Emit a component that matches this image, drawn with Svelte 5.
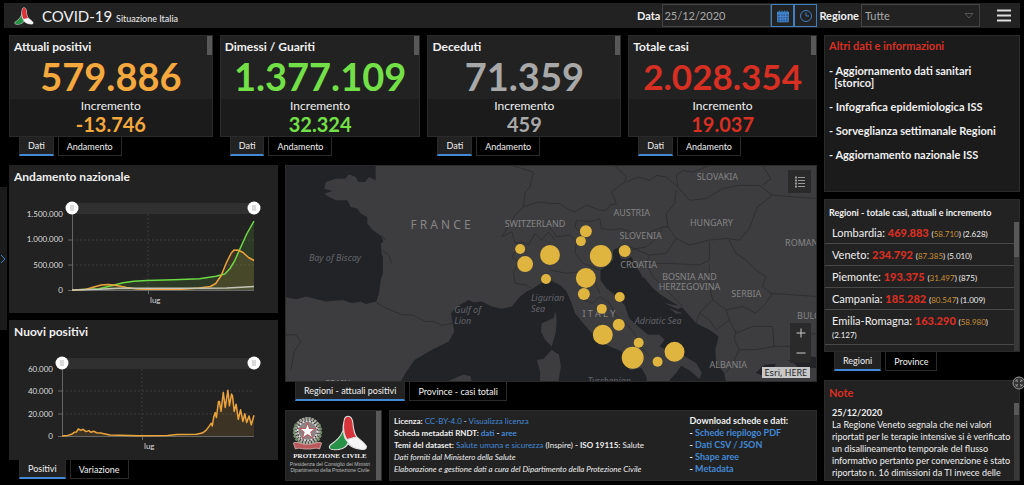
<script lang="ts">
  type Point = [number, number]

  const kpis = [
    { title: 'Attuali positivi', total: '579.886', delta: '-13.746', tone: 'orange' },
    { title: 'Dimessi / Guariti', total: '1.377.109', delta: '32.324', tone: 'green' },
    { title: 'Deceduti', total: '71.359', delta: '459', tone: 'grey' },
    { title: 'Totale casi', total: '2.028.354', delta: '19.037', tone: 'red' },
  ]

  const regions = [
    { name: 'Lombardia', total: '469.883', active: '58.710', delta: '2.628' },
    { name: 'Veneto', total: '234.792', active: '87.385', delta: '5.010' },
    { name: 'Piemonte', total: '193.375', active: '31.497', delta: '875' },
    { name: 'Campania', total: '185.282', active: '80.547', delta: '1.009' },
    { name: 'Emilia-Romagna', total: '163.290', active: '58.980', delta: '2.127' },
    { name: 'Lazio', total: '155.667', active: '76.674', delta: '1.691' },
  ]

  const links = [
    'Infografica epidemiologica ISS',
    'Sorveglianza settimanale Regioni',
    'Aggiornamento nazionale ISS',
  ]

  const downloads = ['Schede riepilogo PDF', 'Dati CSV / JSON', 'Shape aree', 'Metadata']

  // [share of the period, thousands of people]
  const recovered: Point[] = [
    [0, 0], [0.15, 25], [0.21, 80], [0.28, 145], [0.34, 175], [0.41, 192], [0.56, 205], [0.7, 225],
    [0.79, 277], [0.84, 322], [0.868, 430], [0.895, 595], [0.923, 825], [0.96, 1120], [1, 1377],
  ]
  const positive: Point[] = [
    [0, 0], [0.07, 8], [0.12, 60], [0.16, 98], [0.2, 108], [0.24, 95], [0.3, 50], [0.36, 22], [0.42, 14],
    [0.6, 14], [0.7, 38], [0.76, 70], [0.79, 130], [0.82, 290], [0.85, 560], [0.875, 740],
    [0.89, 800], [0.9, 795], [0.91, 800], [0.94, 750], [0.97, 650], [1, 590],
  ]
  const deceased: Point[] = [
    [0, 0], [0.15, 15], [0.25, 34], [0.7, 36], [0.85, 42], [0.93, 57], [1, 71],
  ]
  const newCases: Point[] = [
    [0, 0], [0.03, 0.5], [0.05, 1.5], [0.065, 3.4], [0.075, 3.6], [0.085, 6.3], [0.098, 5], [0.11, 6],
    [0.125, 3.9], [0.14, 4.8], [0.15, 3.3], [0.165, 4.2], [0.18, 3], [0.2, 2.6], [0.25, 1], [0.4, 0.3],
    [0.55, 0.5], [0.6, 1.4], [0.7, 1.6], [0.73, 2.6], [0.75, 5], [0.77, 9.5], [0.777, 11.5],
    [0.783, 9], [0.79, 17], [0.798, 21], [0.804, 16.5], [0.815, 31], [0.82, 31], [0.828, 22],
    [0.84, 39], [0.85, 25.5], [0.864, 41], [0.872, 27], [0.883, 37.5], [0.888, 36], [0.897, 22], [0.907, 28.5],
    [0.918, 15], [0.93, 23.5], [0.942, 13], [0.952, 20], [0.962, 12], [0.974, 18], [0.986, 10], [1, 18.6],
  ]

  function line(data: Point[], left: number, bottom: number, height: number, max: number) {
    return data
      .map(([t, v]) => `${(left + t * (245 - left)).toFixed(1)},${(bottom - (v / max) * height).toFixed(1)}`)
      .join(' ')
  }

  function area(data: Point[], left: number, bottom: number, height: number, max: number) {
    return `${left},${bottom} ${line(data, left, bottom, height, max)} 245,${bottom}`
  }

  const trend = [
    { name: 'recovered', data: recovered },
    { name: 'positive', data: positive },
    { name: 'deceased', data: deceased },
  ]

  const bubbles = [
    [235, 84, 5], [240, 99, 8], [265, 90, 10], [261, 114, 5], [301, 66, 6], [296, 76, 5],
    [316, 91, 11], [340, 86, 6], [301, 113, 10], [299, 129, 6], [335, 132, 5], [317, 144, 5],
    [318, 170, 10], [334, 160, 6], [354, 178, 5], [348, 193, 11], [373, 197, 5], [390, 187, 10],
  ]

  const countries = [
    ['SWITZERLAND', 250, 62], ['AUSTRIA', 347, 51], ['SLOVAKIA', 433, 15], ['HUNGARY', 427, 61],
    ['SLOVENIA', 356, 74], ['CROATIA', 354, 103], ['BOSNIA AND', 405, 115],
    ['HERZEGOVINA', 405, 125], ['SERBIA', 462, 132], ['ALBANIA', 444, 203], ['I T A L Y', 314, 152],
  ] as const

  const seas = [
    ['Bay of Biscay', 23, 96], ['Gulf of', 169, 148], ['Lion', 169, 159], ['Ligurian', 246, 136],
    ['Sea', 246, 147], ['Adriatic Sea', 350, 159], ['Tyrrhenian', 303, 219],
  ] as const

  let date = $state('25/12/2020')
  let region = $state('Tutte')
</script>

{#snippet tabs(first: string, second: string)}
  <div class="tabs" role="tablist">
    <button class="tab active" role="tab" aria-selected="true">{first}</button>
    <button class="tab" role="tab" aria-selected="false">{second}</button>
  </div>
{/snippet}

{#snippet blades()}
  <path class="blade-edge" d="M208 42C216 42 220 48 222 60C224 82 226 94 234 106C246 116 262 128 265 136C265 145 256 146 246 144C230 142 216 137 208 127C200 140 186 146 165 146C152 146 146 140 152 132C168 122 184 108 192 88C192 76 194 60 197 50C199 44 203 42 208 42Z" />
  <path fill="#d8343c" d="M208 43C216 44 219 50 221 62C223 84 225 95 233 106C222 107 213 110 206 113C196 102 193 74 197 54C199 46 203 43 208 43Z" />
  <path fill="#279247" d="M192 90C192 106 199 117 206 123C202 137 188 145 166 145C152 145 148 139 154 132C168 123 184 109 192 90Z" />
  <path fill="#f5f5f5" d="M205 117C214 112 226 109 235 109C246 117 262 129 264 136C264 144 256 145 246 143C228 141 212 133 205 117Z" />
{/snippet}

{#snippet slider(left: number)}
  <rect class="band" x={left} y="13" width={245 - left} height="11" />
  {#each [left, 245] as x}
    <circle cx={x} cy="18" r="6.5" fill="#fff" />
    <path d="M{x - 1} 15v6M{x + 1} 15v6" stroke="#999" stroke-width=".7" />
  {/each}
{/snippet}

<div class="app">
  <header>
    <svg class="brand" viewBox="145 38 125 112" aria-hidden="true">{@render blades()}</svg>
    <h1>COVID-19 <small>Situazione Italia</small></h1>
    <div class="filters">
      <label for="date">Data</label>
      <input id="date" type="text" bind:value={date} />
      <button class="picker" aria-label="Calendario">
        <svg viewBox="0 0 14 14" width="14" height="14">
          <path d="M1.500 3h11v10h-11z" fill="#2d5f9e" />
          <path d="M1.500 3h11v2h-11zM3.500 1.500v2M6 1.500v2M8.500 1.500v2M11 1.500v2" fill="#3f7fc4" stroke="#3f7fc4" stroke-width=".8" />
          <path d="M1.500 7.500h11M1.500 10h11M4.500 5v8M7 5v8M9.500 5v8M1.500 3v10h11V3" fill="none" stroke="#5293dc" stroke-width=".6" />
        </svg>
      </button>
      <button class="picker" aria-label="Ora">
        <svg viewBox="0 0 14 14" width="14" height="14" fill="none" stroke="#3f7fc4">
          <circle cx="7" cy="7" r="5.5" />
          <path d="M7 3.500V7h3" />
        </svg>
      </button>
      <label for="region">Regione</label>
      <div class="select">
        <select id="region" bind:value={region}>
          <option>Tutte</option>
          {#each regions as r}
            <option>{r.name}</option>
          {/each}
        </select>
        <svg viewBox="0 0 10 6" width="10" height="6"><path d="M1 .5h8L5 5z" fill="none" stroke="#555" /></svg>
      </div>
      <button class="menu" aria-label="Menu">
        <svg viewBox="0 0 14 13" width="14" height="13"><path d="M0 1.500h14M0 6.500h14M0 11.500h14" stroke="#ddd" stroke-width="2" /></svg>
      </button>
    </div>
  </header>

  <main>
    <div class="primary">
      <div class="kpis">
        {#each kpis as kpi}
          <section>
            <div class="panel kpi {kpi.tone}">
              <h2>{kpi.title}</h2>
              <div class="total">{kpi.total}</div>
              <div class="increment">
                <span>Incremento</span>
                <strong>{kpi.delta}</strong>
              </div>
              <i class="thumb"></i>
            </div>
            {@render tabs('Dati', 'Andamento')}
          </section>
        {/each}
      </div>

      <div class="lower">
        <div class="charts">
          <section class="panel chart">
            <h2>Andamento nazionale</h2>
            <svg viewBox="0 0 269 123">
              <path class="grid" d="M63 50H245M63 75H245M139 24V100" />
              {#each trend as s}
                <polygon class="area {s.name}" points={area(s.data, 63, 100, 75, 1500)} />
              {/each}
              <path class="axis" d="M63.500 24V100M59 50h4M59 75h4M59 100.500H245M139.500 100v4" />
              {#each trend as s}
                <polyline class="line {s.name}" points={line(s.data, 63, 100, 75, 1500)} />
              {/each}
              <text class="end" x="54" y="27">1.500.000</text>
              <text class="end" x="54" y="52">1.000.000</text>
              <text class="end" x="54" y="78">500.000</text>
              <text class="end" x="54" y="103">0</text>
              <text x="141" y="113">lug</text>
              {@render slider(63)}
            </svg>
          </section>

          <section>
            <div class="panel chart">
              <h2>Nuovi positivi</h2>
              <svg viewBox="0 0 269 115">
                <path class="grid" d="M53 46H245M53 69H245M133 24V91" />
                <polygon class="area positive" points={area(newCases, 53, 91, 67, 60)} />
                <path class="axis" d="M53.500 24V91M49 46h4M49 69h4M49 91.500H245M133.500 91v4" />
                <polyline class="line positive" points={line(newCases, 53, 91, 67, 60)} />
                <text class="end" x="44" y="27">60.000</text>
                <text class="end" x="44" y="49">40.000</text>
                <text class="end" x="44" y="72">20.000</text>
                <text class="end" x="44" y="94">0</text>
                <text x="135" y="104">lug</text>
                {@render slider(53)}
              </svg>
            </div>
            {@render tabs('Positivi', 'Variazione')}
          </section>
        </div>

        <div class="center">
          <section>
            <div class="map">
              <svg viewBox="0 0 532 217" preserveAspectRatio="xMidYMid slice">
                <rect width="532" height="217" fill="#3d3d3f" />
                <g transform="translate(0 -5) scale(.33333)">
                  <path class="sea" d="M0 15H270V60L250 50 238 65 218 65 210 50 190 42 178 55 150 55 120 65 115 85 140 92 115 100 130 110 150 120 185 120 195 140 215 145 225 160 245 170 245 190 262 210 288 228 293 245 286 250 288 285 292 290 292 340 285 360 280 400 272 425 240 432 225 425 200 430 170 420 120 425 60 410 30 418 0 412Z" />
                  <path class="sea" d="M345 668L360 640 388 600 440 570 490 545 507 515 500 480 497 460 515 440 550 420 565 428 590 425 620 440 650 447 680 440 705 410 725 395 745 385 770 368 795 360 825 375 845 395 860 430 870 460 895 490 925 525 945 545 975 560 1010 575 1035 632 1070 625 1085 650 1087 668Z" />
                  <path class="land" d="M812 455L805 475 770 490 768 515 780 540 800 560 812 520 815 480ZM755 600L775 598 800 570 822 585 828 620 820 668H765V635ZM480 668L510 655 535 645 555 650 560 668Z" />
                  <path class="border" d="M272 428L300 445 350 465 380 465 420 485 445 485 470 497 502 490M0 525L30 525 45 545 25 575 15 630M680 15L745 35 735 80 720 95 715 140 690 165 665 205 650 230M715 140L760 125 810 130M650 230L680 215 690 250 710 245 730 255 750 220 770 240 790 215 810 240M700 260L680 290 700 305 685 340 690 370 720 375 740 385" />
                  <path class="border" d="M290 225L298 240M292 272L310 285 318 310" />
                </g>
                <g transform="translate(265 -5) scale(.33333)">
                  <path class="sea" d="M190 270L205 262 212 295 228 298 245 290 262 325 285 355 310 385 335 405 365 425 400 445 440 490 480 510 508 530 498 570 500 610 525 640 530 668H355L380 640 395 618 420 632 450 658 457 640 440 610 405 590 350 570 330 560 345 540 330 525 295 525 265 500 238 475 225 435 195 405 170 385 152 360 152 330 175 315 190 300ZM620 640L645 615 680 612 670 640 650 650ZM715 600L745 605 760 590 805 592V625H780L760 640 740 615Z" />
                  <path class="land" d="M240 300L255 320 250 325ZM268 330L285 350 280 355ZM345 430L400 440 385 448ZM360 445L400 460 380 462Z" />
                  <path class="border" d="M0 130L30 130 50 145 75 155 110 135 150 150 170 150 180 135 200 130 185 95 225 65 230 50 195 15M230 65L265 50 300 60 320 45 350 50 385 80 380 45 400 30 430 35 480 15M385 80L420 120 470 115 520 85 570 75 630 75 670 105 805 115M640 15L665 55 640 75M380 90L375 130 350 160 355 200 340 200 280 225 210 205 190 210 155 205 150 175 120 185 80 180 75 200 100 220M355 200L380 235 420 255 480 240 530 235 570 240 600 205 625 140 670 105M340 200L315 240 290 260 240 270 220 255 205 262M380 235L350 280 300 285 240 260M300 285L290 310 360 310 450 315 480 300 480 245M540 240L560 280 590 300 620 330 650 350 640 380 665 400 805 410M290 310L310 350 340 380 400 440M480 315L480 380 490 420 450 460 440 490M450 460L480 480 500 510 540 480 530 450 490 420M530 450L580 440 620 460 650 430 670 400M540 480L560 520 610 500 670 500 675 560 620 570 570 570 555 540 560 510M570 570L550 610 530 640M675 560L720 560 760 530 805 520M0 200L20 230 60 225 80 245 75 280 100 310 150 330M0 330L50 340 90 335 130 355 150 400M100 420L130 430 150 410 180 430 200 470 230 490 260 530 270 560 300 590" />
                </g>
                <text class="france" x="125" y="64">F R A N C E</text>
                {#each countries as [name, x, y]}
                  <text class="country" {x} {y}>{name}</text>
                {/each}
                <text class="country start" x="501" y="81">ROMANIA</text>
                <text class="country start" x="513" y="154">BULGARIA</text>
                <text class="country" x="52" y="222">SPAIN</text>
                {#each seas as [name, x, y]}
                  <text class="water" {x} {y}>{name}</text>
                {/each}
                {#each bubbles as [cx, cy, r]}
                  <circle class="bubble" {cx} {cy} {r} />
                {/each}
              </svg>
              <button class="legend" aria-label="Legenda">
                <svg viewBox="0 0 12 12" width="12" height="12" stroke="#999"><path d="M4 1.500h7M4 4.500h7M4 7.500h7M4 10.500h7" /><path d="M1 1.500h2M1 4.500h2M1 7.500h2M1 10.500h2" stroke-width="2" /></svg>
              </button>
              <div class="zoom">
                <button aria-label="Ingrandisci"><svg viewBox="0 0 10 10" width="10" height="10"><path d="M5 .5v9M.5 5h9" stroke="#ccc" /></svg></button>
                <button aria-label="Riduci"><svg viewBox="0 0 10 10" width="10" height="10"><path d="M.5 5h9" stroke="#ccc" /></svg></button>
              </div>
              <span class="credit">Esri, HERE</span>
            </div>
            {@render tabs('Regioni - attuali positivi', 'Province - casi totali')}
          </section>

          <div class="info">
            <div class="panel logos">
              <div class="marks">
                <svg viewBox="36 42 92 104" width="31" height="35" aria-label="Repubblica Italiana">
                  <circle cx="82" cy="86" r="36" fill="none" stroke="#a9aaa0" stroke-width="10" stroke-dasharray="7 2" />
                  <path d="M48 66C36 90 42 114 66 126M116 66C128 90 122 114 98 126" fill="none" stroke="#6f8c68" stroke-width="7" stroke-dasharray="8 3" />
                  <circle cx="82" cy="86" r="29" fill="#8e8383" stroke="#ddd" stroke-width="5" stroke-dasharray="6 4" />
                  <path d="M82 62L88 79 106 79 92 90 97 108 82 97 67 108 72 90 58 79 76 79Z" fill="#fff" stroke="#b45c60" stroke-width="3" />
                  <path d="M40 122C54 116 64 128 82 126C100 128 110 116 124 122L118 140C104 134 96 142 82 140C68 142 60 134 46 140Z" fill="#b9595c" stroke="#e2c9c9" stroke-width="2" />
                </svg>
                <svg viewBox="145 38 125 112" width="40" height="36" aria-label="Protezione Civile">{@render blades()}</svg>
              </div>
              <b>PROTEZIONE CIVILE</b>
              <span>Presidenza del Consiglio dei Ministri</span>
              <span>Dipartimento della Protezione Civile</span>
              <i class="thumb"></i>
            </div>
            <div class="panel credits">
              <div>
                <p><b>Licenza:</b> <a href="#licenza">CC-BY-4.0</a> - <a href="#visualizza">Visualizza licenza</a></p>
                <p><b>Scheda metadati RNDT: <a href="#dati">dati</a> - <a href="#aree">aree</a></b></p>
                <p><b>Temi del dataset:</b> <a href="#temi">Salute umana e sicurezza</a> (Inspire) <b>- ISO 19115:</b> Salute</p>
                <p><em>Dati forniti dal Ministero della Salute</em></p>
                <p><em>Elaborazione e gestione dati a cura del Dipartimento della Protezione Civile</em></p>
              </div>
              <div class="downloads">
                <p>Download schede e dati:</p>
                {#each downloads as item}
                  <p>- <a href="#download">{item}</a></p>
                {/each}
              </div>
            </div>
          </div>
        </div>
      </div>
    </div>

    <aside>
      <section class="panel other">
        <h2>Altri dati e informazioni</h2>
        <a href="#storico">- Aggiornamento dati sanitari<br />&nbsp; [storico]</a>
        {#each links as item}
          <a href="#info">- {item}</a>
        {/each}
      </section>

      <section class="list">
        <div class="panel">
          <h2>Regioni - totale casi, attuali e incremento</h2>
          <div class="scroller">
            <ul>
              {#each regions as r}
                <li>{r.name}: <strong>{r.total}</strong> <small>(<span>{r.active}</span>) ({r.delta})</small></li>
              {/each}
            </ul>
            <i class="track"></i>
          </div>
        </div>
        {@render tabs('Regioni', 'Province')}
      </section>

      <section class="panel note">
        <h2>Note</h2>
        <div class="scroller">
          <p><b>25/12/2020</b><br />La Regione Veneto segnala che nei valori riportati per le terapie intensive si è verificato un disallineamento temporale del flusso informativo pertanto per convenzione è stato riportato n. 16 dimissioni da TI invece delle</p>
          <i class="track"></i>
        </div>
        <button class="expand" aria-label="Espandi">
          <svg viewBox="0 0 14 14" width="14" height="14" fill="none" stroke="#999"><circle cx="7" cy="7" r="6" fill="#333" /><path d="M4 6V4h2M8 4h2v2M10 8v2H8M6 10H4V8M4 4l2 2M10 4L8 6M10 10L8 8M4 10l2-2" stroke-width=".8" /></svg>
        </button>
      </section>
    </aside>
  </main>

  <button class="drawer" aria-label="Apri pannello">
    <svg viewBox="0 0 5 10" width="5" height="10"><path d="M0 1l4 4-4 4" fill="none" stroke="#3f7fc4" /></svg>
  </button>
</div>

<style>
  :global(body) {
    margin: 0;
    background: #000;
  }

  * { box-sizing: border-box; }

  .app {
    position: relative;
    min-height: 100vh;
    padding: 3px 4px 4px;
    background: #000;
    color: #f0f0f0;
    font-family: Lato, "Open Sans", sans-serif;
    font-size: 12px;
    overflow: hidden;
  }

  button {
    font: inherit;
    color: inherit;
    padding: 0;
    border: 0;
    background: none;
    display: flex;
    align-items: center;
    justify-content: center;
    cursor: pointer;
  }

  h1, h2, p, ul {
    margin: 0;
    padding: 0;
  }

  a {
    color: #4289d6;
    text-decoration: none;
  }

  svg { display: block; }

  header {
    display: flex;
    align-items: center;
    height: 25px;
    padding: 0 9px 0 10px;
    background: #222;
  }

  .brand {
    width: 20px;
    height: 18px;
  }

  .blade-edge {
    fill: #ddd;
    stroke: #ddd;
    stroke-width: 4;
  }

  h1 {
    margin-left: 8px;
    font-size: 15px;
    font-weight: 400;
    white-space: nowrap;
  }

  h1 small { font-size: 9px; }

  .filters {
    display: flex;
    align-items: center;
    margin-left: auto;
    height: 23px;
  }

  label {
    margin: 0 2px;
    font-size: 11px;
    font-weight: 700;
  }

  input, select {
    height: 23px;
    border: 1px solid #444;
    border-radius: 0;
    background: #222;
    color: #aaa;
    font: inherit;
    font-size: 11px;
  }

  input {
    width: 109px;
    padding: 0 1px;
  }

  .picker {
    width: 23px;
    height: 23px;
    border: 1px solid #3f7fc4;
  }

  .select { position: relative; }

  select {
    width: 119px;
    padding: 0 3px;
    appearance: none;
  }

  .select svg {
    position: absolute;
    right: 6px;
    top: 9px;
    pointer-events: none;
  }

  .menu { margin-left: 17px; }

  main {
    display: grid;
    grid-template-columns: 808fr 196fr;
    gap: 7px;
    padding: 7px 0 0 5px;
  }

  .panel {
    position: relative;
    background: #222;
    border: 1px solid #2a2a2a;
  }

  h2 {
    font-size: 12px;
    font-weight: 700;
    line-height: 15px;
    white-space: nowrap;
  }

  .kpis {
    display: grid;
    grid-template-columns: 204fr 201fr 194fr 189fr;
    gap: 7px;
  }

  .kpi {
    text-align: center;
    padding-top: 3px;
  }

  .kpi h2 {
    text-align: left;
    padding-left: 4px;
  }

  .total {
    font-size: 38px;
    font-weight: 700;
    line-height: 45px;
  }

  .increment {
    height: 37px;
    background: #1b1b1b;
    line-height: 14px;
  }

  .increment strong {
    display: block;
    font-size: 20px;
    line-height: 22px;
  }

  .orange .total, .orange strong { color: #f4a83d; }
  .green .total, .green strong { color: #74e048; }
  .grey .total, .grey strong { color: #a8a8a8; }
  .red .total, .red strong { color: #d82f23; }
  .red .total { font-size: 35px; }

  .thumb {
    position: absolute;
    top: 0;
    right: 0;
    width: 5px;
    height: 19px;
    background: #585858;
  }

  .tabs {
    display: flex;
    gap: 4px;
    padding-left: 10px;
  }

  .tab {
    height: 19px;
    padding: 0 8px;
    border: 1px solid #2a2a2a;
    border-top: 0;
    font-size: 9px;
    white-space: nowrap;
  }

  .tab.active {
    background: #222;
    border-bottom: 2px solid #4289d6;
  }

  .lower {
    display: grid;
    grid-template-columns: 269fr 532fr;
    gap: 7px;
    margin-top: 9px;
  }

  .charts {
    display: flex;
    flex-direction: column;
    gap: 7px;
  }

  .chart {
    border: 0;
    padding-top: 4px;
  }

  .chart h2 {
    padding-left: 5px;
    margin-bottom: 6px;
  }

  .chart svg { width: 100%; }

  .chart text {
    fill: #ddd;
    font-size: 8px;
  }

  .chart .end { text-anchor: end; }
  .band { fill: #303030; }

  .grid {
    stroke: #3a3a3a;
    stroke-dasharray: 2 2;
    fill: none;
  }

  .axis {
    stroke: #666;
    fill: none;
  }

  .area { fill-opacity: 0.13; }
  .area.recovered { fill: #74e048; }
  .area.positive { fill: #f4a83d; }
  .area.deceased { fill: #a8a8a8; }

  .line {
    fill: none;
    stroke-width: 1.5;
    stroke-linejoin: round;
  }

  .line.recovered { stroke: #6cd944; }
  .line.positive { stroke: #eba33c; }
  .line.deceased { stroke: #c4c4b8; }

  .map {
    position: relative;
    border: 1px solid #2a2a2a;
  }

  .map > svg {
    width: 100%;
    height: 215px;
  }

  .sea { fill: #222327; }
  .land { fill: #3d3d3f; }

  .border {
    fill: none;
    stroke: #2f2f32;
    stroke-width: 3;
    stroke-linejoin: round;
  }

  .map text {
    font-family: "Noto Sans", sans-serif;
    font-size: 9px;
    fill: #858585;
  }

  .map .country { text-anchor: middle; }
  .map .start { text-anchor: start; }
  .map .france { font-size: 12px; }

  .map .water {
    fill: #62646a;
    font-style: italic;
  }

  .bubble { fill: #dfb540; }

  .legend {
    position: absolute;
    top: 4px;
    right: 5px;
    width: 23px;
    height: 23px;
    background: #2a2a2a;
  }

  .zoom {
    position: absolute;
    right: 5px;
    bottom: 18px;
    background: #2a2a2a;
  }

  .zoom button {
    width: 21px;
    height: 20px;
  }

  .credit {
    position: absolute;
    right: 6px;
    bottom: 3px;
    padding: 0 3px;
    background: #c8c8c8;
    color: #222;
    font-family: "Noto Sans", sans-serif;
    font-size: 9px;
    line-height: 11px;
  }

  .info {
    display: grid;
    grid-template-columns: 97fr 428fr;
    gap: 7px;
    margin-top: 9px;
  }

  .logos {
    display: flex;
    flex-direction: column;
    align-items: center;
    padding: 4px 7px 0 0;
    white-space: nowrap;
  }

  .logos .thumb { height: 100%; }

  .marks {
    display: flex;
    align-items: center;
    gap: 5px;
  }

  .logos b {
    font-family: "Liberation Serif", serif;
    font-size: 7px;
    line-height: 10px;
  }

  .logos span {
    font-family: "Liberation Sans", sans-serif;
    font-size: 5px;
    line-height: 6px;
    color: #bbb;
  }

  .credits {
    display: flex;
    justify-content: space-between;
    padding: 4px 28px 5px 4px;
    font-size: 8px;
    line-height: 12px;
    white-space: nowrap;
  }

  .downloads {
    font-size: 9px;
    font-weight: 700;
  }

  aside {
    display: flex;
    flex-direction: column;
  }

  aside h2 { padding: 0 4px; }

  .other {
    display: flex;
    flex-direction: column;
    gap: 12px;
    height: 157px;
    padding-top: 2px;
    background: #1b1b1b;
  }

  .other h2, .note h2 {
    color: #d82f23;
    font-size: 11px;
  }

  .other a {
    padding-left: 4px;
    color: #f0f0f0;
    font-size: 11px;
    font-weight: 700;
    line-height: 12px;
  }

  .list { margin: 7px 0 9px; }

  .list h2 {
    padding-top: 5px;
    padding-bottom: 2px;
    font-size: 9px;
  }

  .scroller {
    display: flex;
    height: 129px;
    overflow: hidden;
  }

  ul {
    flex: 1;
    list-style: none;
  }

  li {
    padding: 4px 0 4px 7px;
    border-bottom: 1px solid #484848;
    font-size: 11px;
    line-height: 13px;
  }

  li strong {
    color: #d82f23;
    font-weight: 900;
  }

  li small {
    font-size: 8px;
    line-height: 8px;
  }

  li span { color: #c98f35; }

  .track {
    flex: none;
    width: 5px;
    background: linear-gradient(#585858 35px, #383838 35px);
  }

  .note {
    flex: 1;
    padding-top: 4px;
  }

  .note .scroller {
    height: 77px;
    margin-top: 3px;
  }

  .note p {
    flex: 1;
    padding: 4px 0 0 7px;
    font-size: 9px;
    line-height: 12px;
  }

  .note .track { background: linear-gradient(#585858 12px, #383838 12px); }

  .expand {
    position: absolute;
    top: -5px;
    right: -7px;
  }

  .drawer {
    position: absolute;
    left: 0;
    top: 187px;
    width: 7px;
    height: 143px;
    background: #1b1b1b;
  }
</style>
